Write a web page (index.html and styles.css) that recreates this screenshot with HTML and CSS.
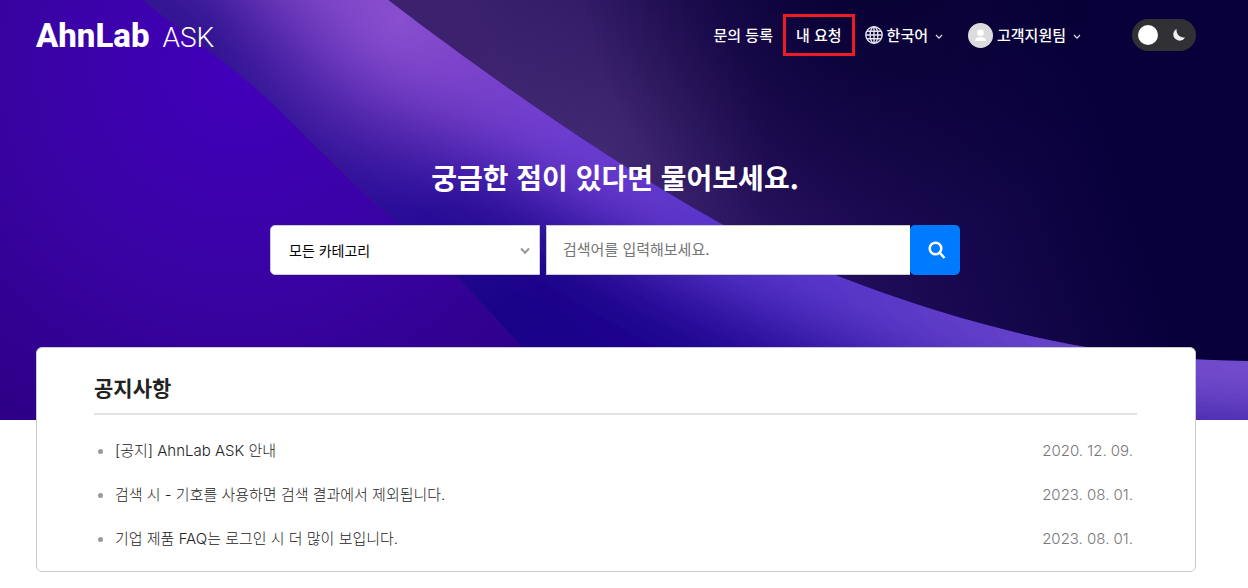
FILE: index.html
```html
<!DOCTYPE html>
<html lang="ko">
<head>
<meta charset="utf-8">
<meta name="viewport" content="width=device-width, initial-scale=1">
<title>AhnLab ASK</title>
<link rel="stylesheet" href="styles.css">
</head>
<body>
<div class="hero">
  <svg class="hero-art" viewBox="0 0 1248 420" preserveAspectRatio="none" aria-hidden="true">
    <defs>
      <radialGradient id="left" gradientUnits="userSpaceOnUse" cx="240" cy="70" r="420">
        <stop offset="0" stop-color="#4200bb"/><stop offset=".5" stop-color="#3903a4"/><stop offset="1" stop-color="#2d0086"/>
      </radialGradient>
      <linearGradient id="band" gradientUnits="userSpaceOnUse" x1="250" y1="0" x2="560" y2="400">
        <stop offset="0" stop-color="#301390"/><stop offset=".5" stop-color="#290e98"/><stop offset=".8" stop-color="#1a0288"/><stop offset="1" stop-color="#1a028c"/>
      </linearGradient>
      <linearGradient id="glow" gradientUnits="userSpaceOnUse" x1="388" y1="0" x2="1248" y2="361">
        <stop offset="0" stop-color="#9454d8"/><stop offset=".25" stop-color="#7442d8"/><stop offset=".5" stop-color="#5c3ad0"/><stop offset="1" stop-color="#8058d4"/>
      </linearGradient>
      <radialGradient id="upper" gradientUnits="userSpaceOnUse" cx="400" cy="20" r="190">
        <stop offset="0" stop-color="#8a50d0" stop-opacity=".8"/><stop offset="1" stop-color="#6a30b8" stop-opacity="0"/>
      </radialGradient>
      <linearGradient id="dark" gradientUnits="userSpaceOnUse" x1="560" y1="260" x2="1090" y2="80">
        <stop offset="0" stop-color="#3c226e"/><stop offset=".5" stop-color="#200c58"/><stop offset="1" stop-color="#07003a"/>
      </linearGradient>
      <radialGradient id="haze" gradientUnits="userSpaceOnUse" cx="600" cy="150" r="170">
        <stop offset="0" stop-color="#4a3078" stop-opacity=".6"/><stop offset="1" stop-color="#4a3078" stop-opacity="0"/>
      </radialGradient>
      <radialGradient id="night" gradientUnits="userSpaceOnUse" cx="860" cy="-30" r="280">
        <stop offset="0" stop-color="#05002e" stop-opacity=".9"/><stop offset="1" stop-color="#05002e" stop-opacity="0"/>
      </radialGradient>
      <filter id="soft" filterUnits="userSpaceOnUse" x="0" y="-400" width="1700" height="1200"><feGaussianBlur stdDeviation="46"/></filter>
      <clipPath id="bandClip"><path d="M143 0C260 85 350 180 398 223C450 268 480 300 521 347L575 420H1248V361C1190 360 1140 357 1086 347C970 327 830 280 720 223C600 156 480 70 388 0Z"/></clipPath>
    </defs>
    <rect width="1248" height="420" fill="url(#dark)"/>
    <rect width="1248" height="420" fill="url(#haze)"/>
    <rect width="1248" height="420" fill="url(#night)"/>
    <g clip-path="url(#bandClip)">
      <rect width="1248" height="420" fill="url(#band)"/>
      <path d="M132 -194L388 0C480 70 600 156 720 223C830 280 970 327 1086 347C1140 357 1190 360 1248 361L1500 362" fill="none" stroke="url(#glow)" stroke-width="132" filter="url(#soft)"/>
      <rect width="1248" height="420" fill="url(#upper)"/>
    </g>
    <path d="M0 0H143C200 45 240 72 279 110C320 150 350 180 398 223C450 268 480 300 521 347L575 420H0Z" fill="url(#left)"/>
  </svg>

  <header class="header">
    <a class="brand" href="#"><span class="brand-name">AhnLab</span><span class="brand-sub">ASK</span></a>
    <nav class="nav">
      <a class="nav-link" href="#">문의 등록</a>
      <a class="nav-link nav-link-marked" href="#">내 요청</a>
      <button class="menu" type="button">
        <svg width="18" height="18" viewBox="0 0 18 18" fill="none" stroke="#e4e1ee" stroke-width="1.4" aria-hidden="true"><circle cx="9" cy="9" r="8.2"/><ellipse cx="9" cy="9" rx="3.9" ry="8.2"/><path d="M9 1V17M1 9H17M2 5.2H16M2 12.8H16"/></svg>
        <span>한국어</span>
        <svg class="menu-arrow" width="8" height="6" viewBox="0 0 8 6" fill="none" stroke="#e4e1ee" stroke-width="1.2" aria-hidden="true"><path d="M1 1L4 4.2L7 1"/></svg>
      </button>
      <button class="menu menu-user" type="button">
        <svg width="25" height="25" viewBox="0 0 25 25" aria-hidden="true"><circle cx="12.500" cy="12.500" r="12.500" fill="#dcdcdc"/><circle cx="12.500" cy="9.800" r="3.300" fill="#fff"/><path d="M7 18C7 15.400 9.200 14 12.500 14S18 15.400 18 18Z" fill="#fff"/></svg>
        <span>고객지원팀</span>
        <svg class="menu-arrow" width="8" height="6" viewBox="0 0 8 6" fill="none" stroke="#e4e1ee" stroke-width="1.2" aria-hidden="true"><path d="M1 1L4 4.2L7 1"/></svg>
      </button>
      <label class="theme">
        <input class="theme-input" type="checkbox" aria-label="다크 모드">
        <svg class="theme-moon" width="14" height="14" viewBox="0 0 14 14" aria-hidden="true"><path d="M4.600 .8A6.300 6.300 0 1 0 13.200 9.200C8.500 10.500 3.800 6 4.600 .8Z" fill="#eee"/></svg>
      </label>
    </nav>
  </header>

  <main class="ask">
    <h1 class="ask-title">궁금한 점이 있다면 물어보세요.</h1>
    <form class="search">
      <div class="category">
        <select class="category-select" aria-label="카테고리"><option>모든 카테고리</option></select>
        <svg class="category-arrow" width="10" height="8" viewBox="0 0 10 8" fill="none" stroke="#999" stroke-width="2" aria-hidden="true"><path d="M1 1.500L5 5.800L9 1.500"/></svg>
      </div>
      <input class="search-input" type="search" placeholder="검색어를 입력해보세요." aria-label="검색어">
      <button class="search-button" type="submit" aria-label="검색">
        <svg width="18" height="18" viewBox="0 0 18 18" fill="none" stroke="#fff" stroke-width="2.500" aria-hidden="true"><circle cx="7.500" cy="7.500" r="5.800"/><path d="M11.500 11.500L16.500 17"/></svg>
      </button>
    </form>
  </main>
</div>

<section class="notice">
  <h2 class="notice-title">공지사항</h2>
  <ul class="notice-list">
    <li class="notice-item"><a class="notice-link" href="#">[공지] AhnLab ASK 안내</a><time class="notice-date">2020. 12. 09.</time></li>
    <li class="notice-item"><a class="notice-link" href="#">검색 시 - 기호를 사용하면 검색 결과에서 제외됩니다.</a><time class="notice-date">2023. 08. 01.</time></li>
    <li class="notice-item"><a class="notice-link" href="#">기업 제품 FAQ는 로그인 시 더 많이 보입니다.</a><time class="notice-date">2023. 08. 01.</time></li>
  </ul>
</section>
</body>
</html>
```
FILE: styles.css
```css
* { box-sizing: border-box; }

body {
  margin: 0;
  background: #fff;
  color: #222;
  font-family: "Noto Sans CJK KR", sans-serif;
}

a { color: inherit; text-decoration: none; }
button, input, select { font-family: inherit; }

.hero {
  position: relative;
  min-height: 420px;
  color: #fff;
}

.hero-art {
  position: absolute;
  inset: 0;
  z-index: -1;
  width: 100%;
  height: 100%;
}

.header {
  display: flex;
  align-items: center;
  justify-content: space-between;
  height: 70px;
  padding: 0 52px 0 36px;
}

.brand {
  display: flex;
  align-items: baseline;
  gap: 13px;
  font-family: Roboto, sans-serif;
}

.brand-name { font-size: 33px; font-weight: 800; }
.brand-sub { font-size: 28px; font-weight: 300; }

.nav {
  display: flex;
  align-items: center;
  gap: 10px;
  font-size: 15px;
  font-weight: 500;
  line-height: 24px;
}

.nav-link { white-space: nowrap; }

.nav-link-marked {
  padding: 6px 10px;
  border: 3px solid #ed1c24;
}

.menu {
  display: flex;
  align-items: center;
  gap: 4px;
  padding: 0;
  border: 0;
  background: none;
  color: inherit;
  font-size: 15px;
  font-weight: 500;
  line-height: 24px;
  white-space: nowrap;
}

.menu-arrow { margin: 4px 0 0 3px; }
.menu-user { margin-left: 15px; }

.theme {
  position: relative;
  display: flex;
  margin-left: 41px;
}

.theme-input {
  appearance: none;
  width: 64px;
  height: 32px;
  margin: 0;
  padding: 6px;
  border-radius: 16px;
  background: #303035;
}

.theme-input::before {
  content: "";
  display: block;
  width: 20px;
  height: 20px;
  border-radius: 50%;
  background: #fff;
}

.theme-moon {
  position: absolute;
  top: 9px;
  right: 10px;
}

.ask {
  display: flex;
  flex-direction: column;
  align-items: center;
  padding: 87px 54px 0 36px;
}

.ask-title {
  margin: 0;
  font-size: 28px;
  font-weight: 700;
  line-height: 40px;
}

.search {
  display: flex;
  width: 100%;
  max-width: 690px;
  height: 50px;
  margin-top: 28px;
}

.category {
  position: relative;
  flex: 0 0 270px;
  margin-right: 6px;
}

.category-select {
  appearance: none;
  width: 100%;
  height: 100%;
  padding: 0 18px;
  border: 1px solid #ccc;
  border-radius: 5px 0 0 5px;
  background: #fff;
  color: #000;
  font-size: 14px;
}

.category-arrow {
  position: absolute;
  top: 22px;
  right: 10px;
}

.search-input {
  appearance: none;
  flex: 1;
  min-width: 0;
  padding: 0 16px 3px;
  border: 1px solid #ccc;
  border-right: 0;
  border-radius: 0;
  background: #fff;
  font-size: 15px;
}

.search-input::placeholder { color: #757575; }

.search-button {
  display: grid;
  place-items: center;
  width: 50px;
  padding: 0 0 0 4px;
  border: 0;
  border-radius: 5px;
  background: #007bff;
}

.notice {
  position: relative;
  margin: -73px 52px 16px 36px;
  padding: 22px 58px 10px 57px;
  border: 1px solid #ccc;
  border-radius: 6px;
  background: #fff;
}

.notice-title {
  margin: 0;
  padding-bottom: 9px;
  border-bottom: 2px solid #e3e3e3;
  font-size: 21px;
  font-weight: 700;
  line-height: 34px;
}

.notice-list {
  margin: 0;
  padding: 14px 4px 0;
  list-style: none;
}

.notice-item {
  display: flex;
  align-items: center;
  font-family: Inter, "Noto Sans CJK KR", sans-serif;
  font-size: 15px;
  font-weight: 300;
  line-height: 44px;
}

.notice-item::before {
  content: "";
  width: 5px;
  height: 5px;
  margin-right: 12px;
  border-radius: 50%;
  background: #999;
}

.notice-link { color: #222; }

.notice-date {
  margin-left: auto;
  color: #777;
}
```
